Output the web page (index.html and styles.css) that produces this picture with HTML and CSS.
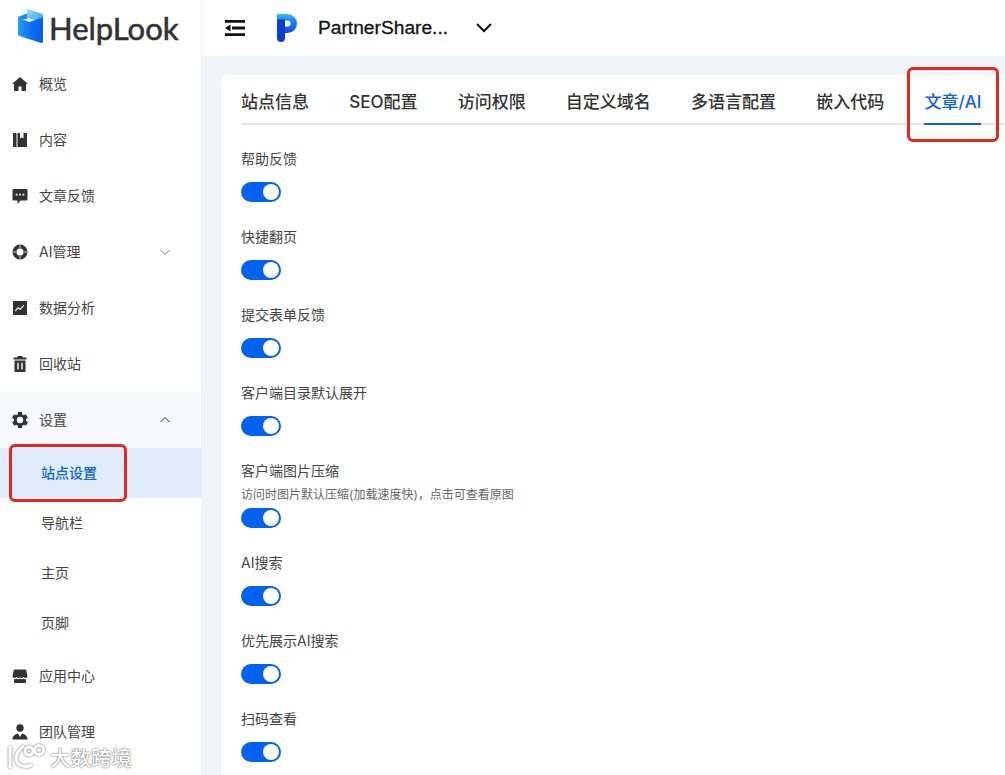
FILE: index.html
```html
<!DOCTYPE html>
<html lang="zh">
<head>
<meta charset="utf-8">
<title>HelpLook</title>
<link rel="stylesheet" href="styles.css">
</head>
<body>
<div class="app">
  <aside class="sidebar">
    <div class="logo">
      <svg class="logo-mark" viewBox="0 0 25 34" width="25" height="34">
        <defs>
          <linearGradient id="lg1" x1="0" y1="0" x2="1" y2="1"><stop offset="0" stop-color="#9adcfc"/><stop offset="1" stop-color="#2c9df7"/></linearGradient>
          <linearGradient id="lg2" x1="0" y1="0" x2="1" y2="0"><stop offset="0" stop-color="#2a9df6"/><stop offset=".5" stop-color="#0a72f3"/><stop offset="1" stop-color="#005ff0"/></linearGradient>
        </defs>
        <path d="M9 0l14.500 4.500c1 .3 1.500 1 1.500 2V13L9 9z" fill="url(#lg1)"/>
        <path d="M0 8l9-3.500V10L2 10z" fill="#1788f4"/>
        <path d="M0 8l11 5 14-4.500V32c0 1.500-1 2.300-2.500 1.800L1.500 27C.5 26.600 0 26 0 25z" fill="url(#lg2)"/>
      </svg>
      <span class="logo-text">HelpLook</span>
    </div>
    <nav class="nav">
      <a class="nav-item"><svg class="ico" viewBox="0 0 16 16"><path d="M8 1L.8 7.200c-.3.300-.1.800.3.800H2v6c0 .6.400 1 1 1h3.500v-4.500h3V15H13c.6 0 1-.4 1-1V8h.9c.4 0 .6-.5.300-.8z"/></svg><span>概览</span></a>
      <a class="nav-item"><svg class="ico" viewBox="0 0 16 16"><path d="M1 1h3.500v14H1zM5.500 1H8v5.500l1.700-1.300 1.800 1.300V1H15v14H5.500z"/></svg><span>内容</span></a>
      <a class="nav-item"><svg class="ico" viewBox="0 0 16 16"><path d="M1.500 1h13c.6 0 1 .4 1 1v9.500c0 .6-.4 1-1 1H8.500L5.500 16v-3.500h-4c-.6 0-1-.4-1-1V2c0-.6.400-1 1-1zM3.800 5.800v1.700h1.700V5.800zm3.400 0v1.700h1.700V5.800zm3.300 0v1.700h1.700V5.800z" fill-rule="evenodd"/></svg><span>文章反馈</span></a>
      <a class="nav-item"><svg class="ico" viewBox="0 0 16 16"><path d="M8 .5a7.500 7.500 0 100 15 7.500 7.500 0 000-15zm0 4a3.500 3.500 0 110 7 3.500 3.500 0 010-7z" fill-rule="evenodd"/><path class="ico-cut" d="M8 .5v4M8 11.500v4M.5 8h4M11.500 8h4"/></svg><span>AI管理</span><svg class="chev" viewBox="0 0 12 12"><path d="M1.500 4l4.500 4.500L10.500 4"/></svg></a>
      <a class="nav-item"><svg class="ico" viewBox="0 0 16 16"><path d="M1 1h14v14H1zM3.500 11.500l2.700-3 2 1.500L12.300 5.500 11.500 5 8 8.500 6 7 3 10.500z" fill-rule="evenodd"/></svg><span>数据分析</span></a>
      <a class="nav-item"><svg class="ico" viewBox="0 0 16 16"><path d="M5.800 0h4.400l.7 1.500h3.600V3.500H1.500v-2h3.600zM2.500 4.500h11V16h-11zM5.300 6.800v6.700h1.400V6.800zm4 0v6.700h1.400V6.800z" fill-rule="evenodd"/></svg><span>回收站</span></a>
      <a class="nav-item settings"><svg class="ico" viewBox="2 2 20 20"><path d="M19.400 13c.1-.3.100-.7.100-1s0-.7-.1-1l2.100-1.600c.2-.2.200-.4.100-.6l-2-3.500c-.1-.2-.4-.3-.6-.2l-2.500 1c-.5-.4-1.100-.7-1.700-1l-.4-2.600c0-.3-.2-.5-.5-.5h-4c-.3 0-.5.200-.5.500l-.4 2.600c-.6.300-1.200.6-1.700 1l-2.500-1c-.2-.1-.5 0-.6.200l-2 3.500c-.1.200-.1.400.1.600L4.600 11c-.1.300-.1.700-.1 1s0 .7.100 1l-2.100 1.600c-.2.200-.2.400-.1.600l2 3.500c.1.200.4.300.6.200l2.500-1c.5.400 1.100.7 1.700 1l.4 2.600c0 .3.200.5.500.5h4c.3 0 .5-.2.500-.5l.4-2.600c.6-.3 1.200-.6 1.700-1l2.500 1c.2.100.5 0 .6-.2l2-3.500c.1-.2.100-.4-.1-.6zM12 16a4 4 0 110-8 4 4 0 010 8z" fill-rule="evenodd"/></svg><span>设置</span><svg class="chev dark" viewBox="0 0 12 12"><path d="M1.500 8L6 3.500 10.500 8"/></svg></a>
      <a class="sub-item active">站点设置</a>
      <a class="sub-item">导航栏</a>
      <a class="sub-item">主页</a>
      <a class="sub-item">页脚</a>
      <a class="nav-item"><svg class="ico" viewBox="0 0 16 16"><path d="M2 1.500h12L15.500 8c0 1.200-1 2-2.200 2-.8 0-1.500-.4-1.900-1-.4.600-1.100 1-1.900 1-.5 0-1-.2-1.500-.5-.5.300-1 .5-1.500.5-.8 0-1.500-.4-1.900-1-.4.600-1.100 1-1.900 1-1.200 0-2.200-.8-2.200-2zM2 11c.9.300 1.900.2 2.700-.4 1 .7 2.300.7 3.300 0 1 .7 2.300.7 3.300 0 .8.600 1.800.7 2.700.4v3c0 .6-.4 1-1 1H3c-.6 0-1-.4-1-1z"/></svg><span>应用中心</span></a>
      <a class="nav-item"><svg class="ico" viewBox="0 0 16 16"><circle cx="8" cy="4" r="3.700"/><path d="M.5 15.500c0-3.300 2.500-5.500 5.500-6l2 3.500 2-3.500c3 .5 5.500 2.700 5.500 6z"/></svg><span>团队管理</span></a>
    </nav>
  </aside>
  <div class="main">
    <header class="topbar">
      <svg class="menu-ico" viewBox="0 0 20 16" width="20" height="16"><path d="M0 0h20v2.800H0zM0 13.200h20V16H0zM7 6.600h13v2.800H7zM0 8l5.500-3.500v7z"/></svg>
      <svg class="site-logo" viewBox="0 0 20 28" width="20" height="28">
        <defs><linearGradient id="pg" x1="0" y1="0" x2="0" y2="1"><stop offset="0" stop-color="#3cc0fa"/><stop offset=".3" stop-color="#1c8cf2"/><stop offset="1" stop-color="#0550e6"/></linearGradient></defs>
        <path d="M0 0h10.500a9.500 9.500 0 010 19H8v-6.500h2.500a3 3 0 000-6H0z" fill="url(#pg)"/>
        <path d="M0 5.500h8V24a4 4 0 01-8 0z" fill="#0a3fd0"/>
      </svg>
      <span class="site-name">PartnerShare...</span>
      <svg class="site-chev" viewBox="0 0 16 10" width="16" height="10"><path d="M1 1l7 7 7-7"/></svg>
    </header>
    <section class="content">
      <div class="card">
        <div class="tabs">
          <a class="tab">站点信息</a>
          <a class="tab">SEO配置</a>
          <a class="tab">访问权限</a>
          <a class="tab">自定义域名</a>
          <a class="tab">多语言配置</a>
          <a class="tab">嵌入代码</a>
          <a class="tab current">文章/AI</a>
        </div>
        <div class="form">
          <div class="field"><div class="label">帮助反馈</div><span class="switch"></span></div>
          <div class="field"><div class="label">快捷翻页</div><span class="switch"></span></div>
          <div class="field"><div class="label">提交表单反馈</div><span class="switch"></span></div>
          <div class="field"><div class="label">客户端目录默认展开</div><span class="switch"></span></div>
          <div class="field has-desc"><div class="label">客户端图片压缩</div><div class="desc">访问时图片默认压缩(加载速度快)，点击可查看原图</div><span class="switch"></span></div>
          <div class="field"><div class="label">AI搜索</div><span class="switch"></span></div>
          <div class="field"><div class="label">优先展示AI搜索</div><span class="switch"></span></div>
          <div class="field"><div class="label">扫码查看</div><span class="switch"></span></div>
        </div>
      </div>
    </section>
  </div>
</div>
<div class="mark mark-side"></div>
<div class="mark mark-tab"></div>
<div class="watermark">
  <svg viewBox="0 0 40 28" width="40" height="28"><path d="M3 3v22M17 3C10 8 8 14 10 19c2 4 8 6 15 3"/><circle cx="22" cy="8" r="4"/><circle cx="32" cy="7" r="4.500"/></svg>
  <span>大数跨境</span>
</div>
</body>
</html>
```
FILE: styles.css
```css
* { box-sizing: border-box; }
html, body { margin: 0; height: 100%; overflow: hidden; }
body {
  font-family: Inter, "Noto Sans CJK SC", sans-serif;
  font-size: 14px;
  color: #333;
  background: #fff;
}
.app { display: flex; height: 775px; }
.sidebar {
  width: 202px;
  flex: none;
  background: #fff;
  border-right: 1px solid #eef1f5;
  overflow: hidden;
}
.logo {
  height: 56px;
  display: flex;
  align-items: center;
  padding-left: 18px;
  gap: 5px;
}
.logo-mark { flex: none; margin-top: -5px; }
.logo-text {
  font-family: Lato, sans-serif;
  font-size: 31px;
  font-weight: 400;
  color: #333;
  -webkit-text-stroke: .6px #333;
  margin-left: 1px;
}
.nav-item {
  height: 56px;
  display: flex;
  align-items: center;
  padding-left: 12px;
  color: #444;
  line-height: 22px;
}
.nav-item.settings { background: #f7f9fc; }
.ico { width: 16px; height: 16px; flex: none; margin-right: 11px; fill: #333; }
.ico-cut { fill: none; stroke: #999; stroke-width: 1.500; }
.chev {
  width: 12px;
  height: 12px;
  margin-left: auto;
  margin-right: 30px;
  fill: none;
  stroke: #777;
  stroke-width: 1;
}
.chev.dark { stroke: #222; }
.sub-item {
  display: flex;
  align-items: center;
  height: 50px;
  padding: 0 0 2px 41px;
  color: #444;
}
.sub-item.active { background: #e0ecfb; color: #0d63d8; font-weight: 500; }
.main { flex: 1; min-width: 0; display: flex; flex-direction: column; }
.topbar {
  height: 56px;
  flex: none;
  display: flex;
  align-items: center;
  padding-left: 23px;
  background: #fff;
}
.menu-ico { fill: #111; margin-right: 32px; flex: none; }
.site-logo { margin-right: 21px; flex: none; }
.site-name {
  font-family: "Liberation Sans", sans-serif;
  font-size: 19.200px;
  font-weight: 400;
  color: #111;
  -webkit-text-stroke: .3px #111;
  width: 158px;
}
.site-chev { fill: none; stroke: #111; stroke-width: 2; flex: none; }
.content { flex: 1; background: #f0f4f8; padding: 19px 0 0 19px; overflow: hidden; }
.card { background: #fff; border-radius: 8px 0 0 0; padding: 0 0 0 20px; height: 100%; }
.tabs {
  display: flex;
  gap: 40.200px;
  height: 50px;
  border-bottom: 2px solid #e4e6ea;
}
.tab {
  height: 50px;
  display: flex;
  align-items: center;
  font-size: 17px;
  font-weight: 500;
  color: #333;
  white-space: nowrap;
}
.tab.current { color: #0d63d8; border-bottom: 2px solid #0d63d8; padding-top: 2px; }
.form { padding-top: 23px; }
.field { padding-bottom: 24px; }
.label { line-height: 22px; color: #444; margin-bottom: 12px; }
.has-desc .label { margin-bottom: 0; }
.desc { font-size: 12px; line-height: 24px; margin: 1px 0; color: #666; }
.switch {
  display: block;
  position: relative;
  width: 40px;
  height: 20px;
  border-radius: 10px;
  background: #0062ee;
}
.switch::after {
  content: "";
  position: absolute;
  right: 2px;
  top: 2px;
  width: 16px;
  height: 16px;
  border-radius: 50%;
  background: #fff;
}
.mark {
  position: absolute;
  border: 3px solid #e8261c;
  border-radius: 6px;
}
.mark-side { left: 9px; top: 444px; width: 118px; height: 58px; }
.mark-tab { left: 907px; top: 67px; width: 92px; height: 75px; }
.watermark {
  position: absolute;
  left: 7px;
  top: 742px;
  display: flex;
  align-items: center;
  gap: 3px;
  font-size: 20.500px;
  font-weight: 500;
  color: #fff;
  text-shadow: 0 0 2px rgba(0,0,0,.6), 0 0 1px rgba(0,0,0,.4);
}
.watermark svg { fill: none; stroke: #fff; stroke-width: 3; filter: drop-shadow(0 0 1px rgba(0,0,0,.6)); }
```
